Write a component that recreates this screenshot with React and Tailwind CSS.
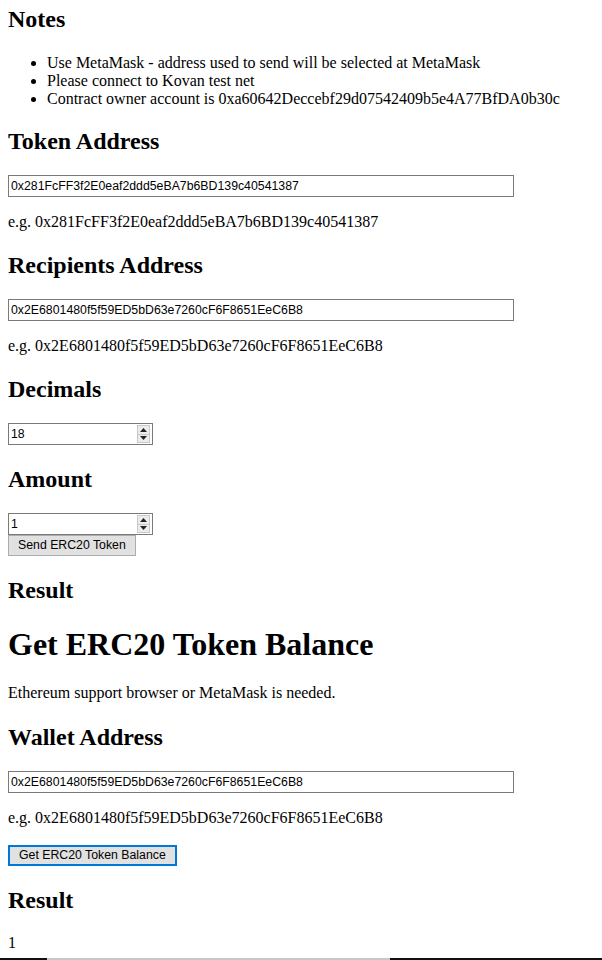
import { useState } from "react";

const TOKEN = "0x281FcFF3f2E0eaf2ddd5eBA7b6BD139c40541387";
const RECIPIENT = "0x2E6801480f5f59ED5bD63e7260cF6F8651EeC6B8";

const H2 = ({ children, className = "" }) => (
  <h2 className={`text-[24px] font-bold leading-[28px] my-[20px] ${className}`}>{children}</h2>
);

const TextInput = ({ value, onChange }) => (
  <input
    type="text"
    value={value}
    onChange={(e) => onChange(e.target.value)}
    className="block w-[506px] h-[22px] border border-[#7a7a7a] px-[2px] text-[12.3px] font-['Liberation_Sans',sans-serif] text-black outline-none"
  />
);

const NumberInput = ({ value, onChange }) => (
  <div className="flex items-center w-[145px] h-[22px] border border-[#7a7a7a] bg-white">
    <input
      type="text"
      value={value}
      onChange={(e) => onChange(e.target.value)}
      className="min-w-0 flex-1 h-full px-[2px] text-[12.3px] font-['Liberation_Sans',sans-serif] text-black outline-none"
    />
    {/* spinner */}
    <div className="flex flex-col w-[13px] h-[18px] mr-[2px] border border-[#c9c9c9] bg-[#ececec]">
      <div className="flex-1 flex items-center justify-center border-b border-[#c9c9c9]">
        <svg width="7" height="4" viewBox="0 0 7 4">
          <path d="M3.5 0 L7 4 L0 4 Z" fill="#222" />
        </svg>
      </div>
      <div className="flex-1 flex items-center justify-center">
        <svg width="7" height="4" viewBox="0 0 7 4">
          <path d="M0 0 L7 0 L3.5 4 Z" fill="#222" />
        </svg>
      </div>
    </div>
  </div>
);

const Button = ({ children, focused }) => (
  <button
    type="button"
    className={`block h-[21px] px-[9px] bg-[#e1e1e1] text-[12.3px] leading-[15px] font-['Liberation_Sans',sans-serif] text-black ${
      focused ? "border-2 border-[#0078d7]" : "border border-[#adadad]"
    }`}
  >
    {children}
  </button>
);

export default function App() {
  const [token, setToken] = useState(TOKEN);
  const [recipient, setRecipient] = useState(RECIPIENT);
  const [decimals, setDecimals] = useState("18");
  const [amount, setAmount] = useState("1");
  const [wallet, setWallet] = useState(RECIPIENT);

  return (
    <div className="bg-white text-black font-['Liberation_Serif','Times_New_Roman',serif] text-[16px] leading-[18px]">
      <div className="px-2 pt-[5px]">
        {/* Notes */}
        <H2 className="mt-0">Notes</H2>
        <ul className="list-disc pl-[39px] mt-[21px] mb-[19px]">
          <li>Use MetaMask - address used to send will be selected at MetaMask</li>
          <li>Please connect to Kovan test net</li>
          <li>Contract owner account is 0xa60642Deccebf29d07542409b5e4A77BfDA0b30c</li>
        </ul>

        {/* Send */}
        <H2 className="mt-[19px]">Token Address</H2>
        <TextInput value={token} onChange={setToken} />
        <p className="my-[16px]">e.g. {TOKEN}</p>

        <H2>Recipients Address</H2>
        <TextInput value={recipient} onChange={setRecipient} />
        <p className="my-[16px]">e.g. {RECIPIENT}</p>

        <H2>Decimals</H2>
        <NumberInput value={decimals} onChange={setDecimals} />

        <H2>Amount</H2>
        <NumberInput value={amount} onChange={setAmount} />
        <Button>Send ERC20 Token</Button>

        <H2>Result</H2>

        {/* Balance */}
        <h1 className="text-[32px] font-bold leading-[37px] mt-[22px] mb-[21px]">Get ERC20 Token Balance</h1>
        <p className="my-[21px]">Ethereum support browser or MetaMask is needed.</p>

        <H2 className="mt-[21px]">Wallet Address</H2>
        <TextInput value={wallet} onChange={setWallet} />
        <p className="my-[16px]">e.g. {RECIPIENT}</p>
        <div className="pt-[2px]">
          <Button focused>Get ERC20 Token Balance</Button>
        </div>

        <H2>Result</H2>
        <p className="mt-[20px]">1</p>
      </div>

      {/* bottom edge */}
      <div className="flex h-[2px] mt-[6px]">
        <div className="w-[47px] bg-[#111]" />
        <div className="w-[343px] bg-[#c8c8c8]" />
        <div className="flex-1 bg-[#111]" />
      </div>
    </div>
  );
}
